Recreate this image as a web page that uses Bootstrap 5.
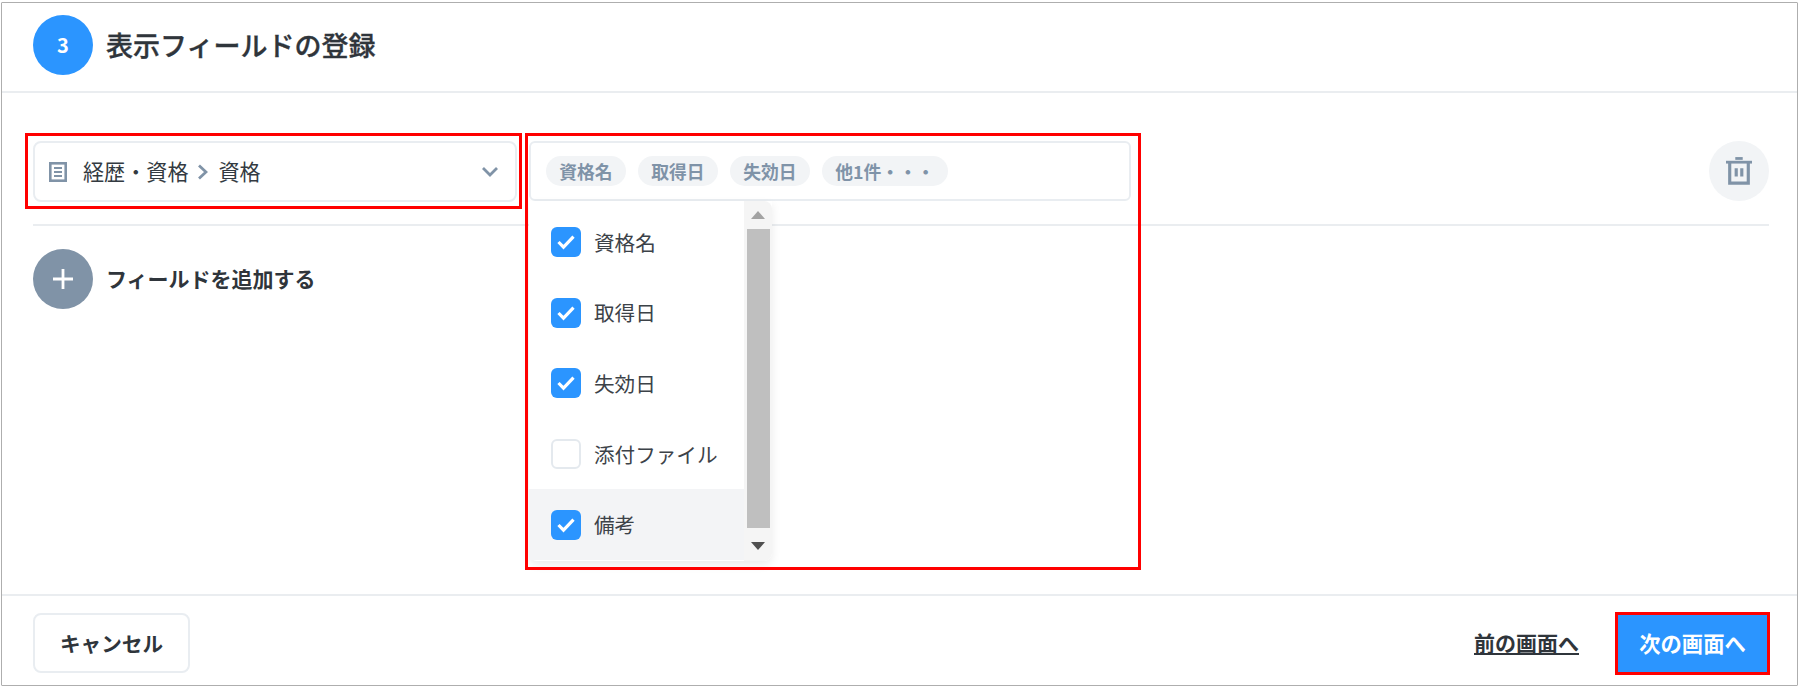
<!DOCTYPE html>
<html lang="ja">
<head>
<meta charset="utf-8">
<title>表示フィールドの登録</title>
<link href="https://cdn.jsdelivr.net/npm/bootstrap@5.3.0/dist/css/bootstrap.min.css" rel="stylesheet">
<style>
html, body { height: 688px; overflow: hidden; background: #fff; }
body { font-family: "Noto Sans CJK JP", "Noto Sans", sans-serif; color: #333a41; font-size: 20.6px; line-height: 1.4; padding: 2px 2px 2px 1px; }
.frame { height: 684px; border: 1.5px solid #aeaeae; border-radius: 1px; }
.head-bar { height: 90px; padding: 0 0 4px 31px; border-bottom: 2px solid #eaedf0; }
.step-dot, .add-dot, .trash-dot { width: 60px; height: 60px; border-radius: 50%; flex: none; }
.step-dot { background: #2b95ff; color: #fff; font-weight: 700; font-size: 20px; }
.head-title { font-size: 27px; font-weight: 500; -webkit-text-stroke: .35px #2f353b; margin-left: 13px; color: #2f353b; }
.main-area { padding: 48px 28px 0 31px; position: relative; }
.field-row { height: 60px; }
.sel-box { width: 484px; height: 61px; border: 2px solid #e9edf1; border-radius: 8px; padding: 0 16px 0 14px; position: relative; font-size: 21.1px; }
.sel-text { margin-left: 16px; }
.sel-sep { margin: 0 10px 0 9px; }
.multi-box { width: 602px; height: 60px; margin-left: 12px; border: 2px solid #e9edf1; border-radius: 6px; padding-left: 15px; position: relative; }
.chip-pill { height: 30px; padding: 0 13.3px; border-radius: 15px; background: #f2f4f6; color: #7f93a8; font-weight: 700; font-size: 17.8px; margin-right: 12px; white-space: nowrap; }
.trash-dot { background: #f2f4f6; }
.mark-red { position: absolute; border: 3px solid #f00; pointer-events: none; }
.mark-sel { left: -10px; right: -7px; top: -10px; bottom: -9px; }
.mark-multi { left: -6px; top: -10px; width: 616px; height: 437px; z-index: 5; }
.drop-panel { position: absolute; left: -2px; top: 58px; width: 243px; height: 360px; background: #fff; z-index: 3; box-shadow: 0 4px 10px rgba(0,0,0,.08); border-radius: 0 0 8px 8px; }
.drop-list { padding-top: 6px; flex: 1 1 auto; }
.drop-item { height: 70.6px; padding-left: 22px; color: #3c4248; }
.drop-item.is-hover { background: #f3f4f6; }
.tick-box { width: 30px; height: 30px; border-radius: 6px; background: #2b95ff; flex: none; margin-right: 13px; }
.tick-box.is-off { background: #fff; border: 2px solid #e4e9ee; }
.scroll-rail { width: 28px; flex: none; background: #f5f5f5; padding: 0 2.5px; border-radius: 0 8px 8px 0; }
.scroll-thumb { background: #bfbfbf; height: 299px; }
.scroll-end { height: 28px; }
.scroll-end-low { padding-top: 3px; }
.field-rule { border-top: 2px solid #eaedf0; margin-top: 23px; }
.add-row { margin-top: 23px; }
.add-dot { background: #8093a7; }
.add-label { font-weight: 700; font-size: 21px; margin-left: 13px; color: #2f353b; }
.foot-bar { height: 91px; border-top: 2px solid #eaedf0; padding: 5px 30px 0 31px; }
.btn-cancel { width: 157px; height: 60px; border: 2px solid #e9edf1; border-radius: 8px; background: #fff; font-weight: 700; font-size: 20.6px; color: #2f353b; padding: 0; }
.back-link { color: #2f353b; font-weight: 700; font-size: 21px; text-decoration: underline; margin-right: 39px; }
.next-wrap { position: relative; }
.btn-next { width: 149px; height: 57px; background: #2b95ff; border: 0; border-radius: 0; color: #fff; font-weight: 700; font-size: 21.3px; padding: 0; }
.mark-next { left: -3px; right: -3px; top: -3px; bottom: -3px; }
</style>
</head>
<body>
<div class="frame d-flex flex-column">
  <div class="head-bar d-flex align-items-center flex-none">
    <div class="step-dot d-flex align-items-center justify-content-center">3</div>
    <div class="head-title">表示フィールドの登録</div>
  </div>
  <div class="main-area flex-grow-1">
    <div class="field-row d-flex">
      <div class="sel-box d-flex align-items-center">
        <svg width="18" height="20" viewBox="0 0 18 20"><rect x="1.3" y="1.3" width="15.4" height="17.4" fill="none" stroke="#8093a7" stroke-width="2.6"/><path d="M5 6h8M5 10h8M5 14h8" stroke="#8093a7" stroke-width="2"/></svg>
        <span class="sel-text">経歴・資格</span>
        <svg class="sel-sep" width="11" height="16" viewBox="0 0 11 16"><path d="M2 1.5 9 8l-7 6.5" fill="none" stroke="#8093a7" stroke-width="2.8"/></svg>
        <span>資格</span>
        <svg class="ms-auto" width="18" height="12" viewBox="0 0 18 12"><path d="M2 2l7 7 7-7" fill="none" stroke="#8093a7" stroke-width="2.8"/></svg>
        <div class="mark-red mark-sel"></div>
      </div>
      <div class="multi-box d-flex align-items-center">
        <span class="chip-pill d-flex align-items-center">資格名</span>
        <span class="chip-pill d-flex align-items-center">取得日</span>
        <span class="chip-pill d-flex align-items-center">失効日</span>
        <span class="chip-pill d-flex align-items-center">他1件・・・</span>
        <div class="mark-red mark-multi"></div>
        <div class="drop-panel d-flex">
          <div class="drop-list">
            <div class="drop-item d-flex align-items-center"><span class="tick-box d-flex align-items-center justify-content-center"><svg width="20" height="16" viewBox="0 0 20 16"><path d="M2.5 8l5 5.2 10-10.5" fill="none" stroke="#fff" stroke-width="3.2"/></svg></span>資格名</div>
            <div class="drop-item d-flex align-items-center"><span class="tick-box d-flex align-items-center justify-content-center"><svg width="20" height="16" viewBox="0 0 20 16"><path d="M2.5 8l5 5.2 10-10.5" fill="none" stroke="#fff" stroke-width="3.2"/></svg></span>取得日</div>
            <div class="drop-item d-flex align-items-center"><span class="tick-box d-flex align-items-center justify-content-center"><svg width="20" height="16" viewBox="0 0 20 16"><path d="M2.5 8l5 5.2 10-10.5" fill="none" stroke="#fff" stroke-width="3.2"/></svg></span>失効日</div>
            <div class="drop-item d-flex align-items-center"><span class="tick-box is-off"></span>添付ファイル</div>
            <div class="drop-item is-hover d-flex align-items-center"><span class="tick-box d-flex align-items-center justify-content-center"><svg width="20" height="16" viewBox="0 0 20 16"><path d="M2.5 8l5 5.2 10-10.5" fill="none" stroke="#fff" stroke-width="3.2"/></svg></span>備考</div>
          </div>
          <div class="scroll-rail d-flex flex-column">
            <div class="scroll-end d-flex align-items-center justify-content-center"><svg width="14" height="8" viewBox="0 0 14 8"><path d="M7 0l7 8H0z" fill="#a3a3a3"/></svg></div>
            <div class="scroll-thumb"></div>
            <div class="scroll-end-low flex-grow-1 d-flex align-items-center justify-content-center"><svg width="14" height="8" viewBox="0 0 14 8"><path d="M0 0h14L7 8z" fill="#505050"/></svg></div>
          </div>
        </div>
      </div>
      <div class="trash-dot ms-auto d-flex align-items-center justify-content-center">
        <svg width="26" height="28" viewBox="0 0 28 30"><path d="M10 1.5h8" stroke="#8093a7" stroke-width="3"/><path d="M0 5.5h28" stroke="#8093a7" stroke-width="3"/><path d="M4 6v22h20V6" fill="none" stroke="#8093a7" stroke-width="3.4"/><path d="M11 12v9M17 12v9" stroke="#8093a7" stroke-width="3.4"/></svg>
      </div>
    </div>
    <div class="field-rule"></div>
    <div class="add-row d-flex align-items-center">
      <div class="add-dot d-flex align-items-center justify-content-center"><svg width="24" height="24" viewBox="0 0 24 24"><path d="M12 2v20M2 12h20" stroke="#fff" stroke-width="2.8"/></svg></div>
      <div class="add-label">フィールドを追加する</div>
    </div>
  </div>
  <div class="foot-bar d-flex align-items-center">
    <button type="button" class="btn btn-cancel">キャンセル</button>
    <a href="#" class="back-link ms-auto">前の画面へ</a>
    <div class="next-wrap">
      <button type="button" class="btn btn-next d-flex align-items-center justify-content-center">次の画面へ</button>
      <div class="mark-red mark-next"></div>
    </div>
  </div>
</div>
<script src="https://cdn.jsdelivr.net/npm/bootstrap@5.3.0/dist/js/bootstrap.bundle.min.js"></script>
</body>
</html>
